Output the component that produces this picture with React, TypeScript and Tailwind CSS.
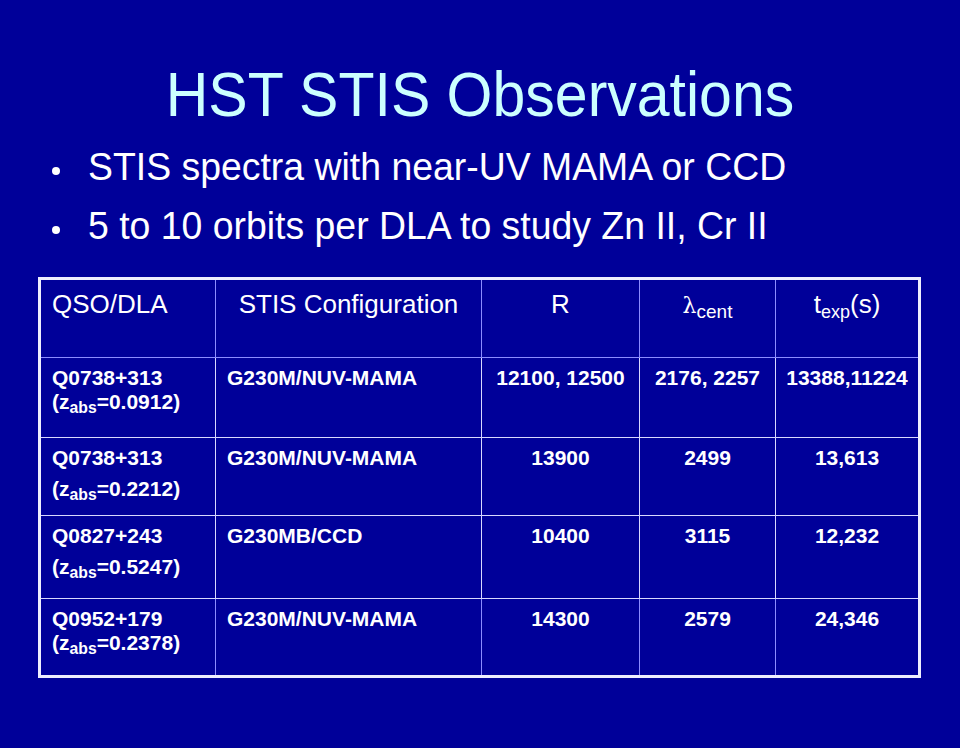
import React from 'react';

interface Row {
  qso: string;
  z: string;
  config: string;
  r: string;
  lambda: string;
  texp: string;
  tight: boolean;
  height: string;
}

const rows: Row[] = [
  { qso: 'Q0738+313', z: '0.0912', config: 'G230M/NUV-MAMA', r: '12100, 12500', lambda: '2176, 2257', texp: '13388,11224', tight: true, height: 'h-[80px]' },
  { qso: 'Q0738+313', z: '0.2212', config: 'G230M/NUV-MAMA', r: '13900', lambda: '2499', texp: '13,613', tight: false, height: 'h-[78px]' },
  { qso: 'Q0827+243', z: '0.5247', config: 'G230MB/CCD', r: '10400', lambda: '3115', texp: '12,232', tight: false, height: 'h-[83px]' },
  { qso: 'Q0952+179', z: '0.2378', config: 'G230M/NUV-MAMA', r: '14300', lambda: '2579', texp: '24,346', tight: true, height: 'h-[78px]' },
];

const bullets = [
  'STIS spectra with near-UV MAMA or CCD',
  '5 to 10 orbits per DLA to study Zn II, Cr II',
];

const App: React.FC = () => {
  return (
    <div className="w-[960px] h-[748px] bg-[#000099] overflow-hidden font-['Liberation_Sans',Arial,sans-serif] text-white">
      <h1 className="mt-[66px] h-[59px] text-center text-[59px] leading-none text-[#ccffff] scale-y-[1.065]">
        HST STIS Observations
      </h1>

      <ul className="mt-[12px] pl-[52px]">
        {bullets.map(text => (
          <li key={text} className="flex items-center h-[59px]">
            <span className="w-[8px] h-[8px] shrink-0 rounded-full bg-white mt-[8px]" />
            <span className="ml-[28px] text-[37.4px] leading-none scale-y-[1.05]">{text}</span>
          </li>
        ))}
      </ul>

      {/* observation table */}
      <table className="mt-[22px] ml-[38px] w-[883px] table-fixed border-collapse border-[3px] border-[#eeeeff]">
        <colgroup>
          <col className="w-[176px]" />
          <col className="w-[266px]" />
          <col className="w-[158px]" />
          <col className="w-[136px]" />
          <col className="w-[144px]" />
        </colgroup>
        <thead>
          <tr className="h-[79px] text-[26px] leading-none">
            <th className="align-top font-normal text-left pl-[11px] pt-[11px] border-r border-b border-[#8c8cff]">QSO/DLA</th>
            <th className="align-top font-normal text-center pt-[11px] border-r border-b border-[#8c8cff]">STIS Configuration</th>
            <th className="align-top font-normal text-center pt-[11px] border-r border-b border-[#8c8cff]">R</th>
            <th className="align-top font-normal text-center pt-[11px] border-r border-b border-[#8c8cff]">
              <span className="font-['DejaVu_Serif',serif] text-[22px]">λ</span>
              <sub className="text-[19px]">cent</sub>
            </th>
            <th className="align-top font-normal text-center pt-[11px] border-b border-[#8c8cff]">
              t<sub className="text-[18px]">exp</sub>(s)
            </th>
          </tr>
        </thead>
        <tbody className="font-bold text-[21px]">
          {rows.map((row, i) => {
            const lead = row.tight ? 'leading-[24px] pt-[8px]' : 'leading-[31px] pt-[4px]';
            const line = i < rows.length - 1 ? 'border-b border-[#d8d8ff]' : '';
            return (
              <tr key={i} className={row.height}>
                <td className={`align-top pl-[11px] border-r border-[#8c8cff] ${line} ${lead}`}>
                  <div>{row.qso}</div>
                  <div>
                    (z<sub>abs</sub>={row.z})
                  </div>
                </td>
                <td className={`align-top pl-[11px] border-r border-[#8c8cff] ${line} ${lead}`}>{row.config}</td>
                <td className={`align-top text-center border-r border-[#8c8cff] ${line} ${lead}`}>{row.r}</td>
                <td className={`align-top text-center border-r border-[#8c8cff] ${line} ${lead}`}>{row.lambda}</td>
                <td className={`align-top text-center ${line} ${lead}`}>{row.texp}</td>
              </tr>
            );
          })}
        </tbody>
      </table>
    </div>
  );
};

export default App;
